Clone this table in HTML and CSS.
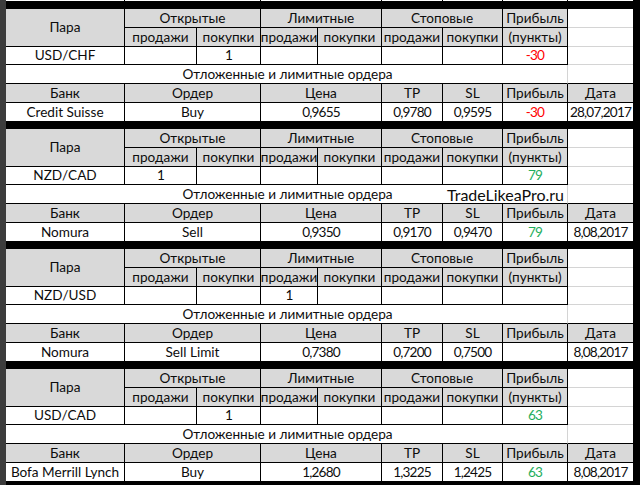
FILE: index.html
```html
<!DOCTYPE html>
<html lang="ru">
<head>
<meta charset="utf-8">
<title>Ордера</title>
<link rel="stylesheet" href="styles.css">
</head>
<body>
<div class="page">
  <div class="gutter"></div>
  <div class="sheet">
    <div class="prev">
      <div class="c"></div><div class="c s2"></div><div class="c s2"></div><div class="c"></div><div class="c"></div><div class="c"></div><div class="c last"></div>
    </div>

    <div class="band"></div>
    <section class="block">
      <div class="c h pair">Пара</div>
      <div class="c h s2">Открытые</div>
      <div class="c h s2">Лимитные</div>
      <div class="c h s2">Стоповые</div>
      <div class="c h">Прибыль</div>
      <div class="c blank"></div>
      <div class="c h">продажи</div><div class="c h">покупки</div>
      <div class="c h">продажи</div><div class="c h">покупки</div>
      <div class="c h">продажи</div><div class="c h">покупки</div>
      <div class="c h">(пункты)</div>
      <div class="c blank"></div>
      <div class="c">USD/CHF</div><div class="c"></div><div class="c n">1</div><div class="c"></div><div class="c"></div><div class="c"></div><div class="c"></div><div class="c n neg">-30</div>
      <div class="c blank"></div>
      <div class="c label">Отложенные и лимитные ордера</div>
      <div class="c labelend"></div>
      <div class="c h">Банк</div><div class="c h s2">Ордер</div><div class="c h s2">Цена</div><div class="c h">TP</div><div class="c h">SL</div><div class="c h">Прибыль</div><div class="c h last">Дата</div>
      <div class="c">Credit Suisse</div><div class="c s2">Buy</div><div class="c s2 n">0,9655</div><div class="c n">0,9780</div><div class="c n">0,9595</div><div class="c n neg">-30</div><div class="c n last">28,07,2017</div>
    </section>

    <div class="band"></div>
    <section class="block">
      <div class="c h pair">Пара</div>
      <div class="c h s2">Открытые</div>
      <div class="c h s2">Лимитные</div>
      <div class="c h s2">Стоповые</div>
      <div class="c h">Прибыль</div>
      <div class="c blank"></div>
      <div class="c h">продажи</div><div class="c h">покупки</div>
      <div class="c h">продажи</div><div class="c h">покупки</div>
      <div class="c h">продажи</div><div class="c h">покупки</div>
      <div class="c h">(пункты)</div>
      <div class="c blank"></div>
      <div class="c">NZD/CAD</div><div class="c n">1</div><div class="c"></div><div class="c"></div><div class="c"></div><div class="c"></div><div class="c"></div><div class="c n pos">79</div>
      <div class="c blank"></div>
      <div class="c label">Отложенные и лимитные ордера</div>
      <div class="c labelend"></div>
      <div class="c h">Банк</div><div class="c h s2">Ордер</div><div class="c h s2">Цена</div><div class="c h">TP</div><div class="c h">SL</div><div class="c h">Прибыль</div><div class="c h last">Дата</div>
      <div class="c">Nomura</div><div class="c s2">Sell</div><div class="c s2 n">0,9350</div><div class="c n">0,9170</div><div class="c n">0,9470</div><div class="c n pos">79</div><div class="c n last">8,08,2017</div>
      <div class="watermark">TradeLikeaPro.ru</div>
    </section>

    <div class="band"></div>
    <section class="block">
      <div class="c h pair">Пара</div>
      <div class="c h s2">Открытые</div>
      <div class="c h s2">Лимитные</div>
      <div class="c h s2">Стоповые</div>
      <div class="c h">Прибыль</div>
      <div class="c blank"></div>
      <div class="c h">продажи</div><div class="c h">покупки</div>
      <div class="c h">продажи</div><div class="c h">покупки</div>
      <div class="c h">продажи</div><div class="c h">покупки</div>
      <div class="c h">(пункты)</div>
      <div class="c blank"></div>
      <div class="c">NZD/USD</div><div class="c"></div><div class="c"></div><div class="c n">1</div><div class="c"></div><div class="c"></div><div class="c"></div><div class="c"></div>
      <div class="c blank"></div>
      <div class="c label">Отложенные и лимитные ордера</div>
      <div class="c labelend"></div>
      <div class="c h">Банк</div><div class="c h s2">Ордер</div><div class="c h s2">Цена</div><div class="c h">TP</div><div class="c h">SL</div><div class="c h">Прибыль</div><div class="c h last">Дата</div>
      <div class="c">Nomura</div><div class="c s2">Sell Limit</div><div class="c s2 n">0,7380</div><div class="c n">0,7200</div><div class="c n">0,7500</div><div class="c"></div><div class="c n last">8,08,2017</div>
    </section>

    <div class="band"></div>
    <section class="block">
      <div class="c h pair">Пара</div>
      <div class="c h s2">Открытые</div>
      <div class="c h s2">Лимитные</div>
      <div class="c h s2">Стоповые</div>
      <div class="c h">Прибыль</div>
      <div class="c blank"></div>
      <div class="c h">продажи</div><div class="c h">покупки</div>
      <div class="c h">продажи</div><div class="c h">покупки</div>
      <div class="c h">продажи</div><div class="c h">покупки</div>
      <div class="c h">(пункты)</div>
      <div class="c blank"></div>
      <div class="c">USD/CAD</div><div class="c"></div><div class="c n">1</div><div class="c"></div><div class="c"></div><div class="c"></div><div class="c"></div><div class="c n pos">63</div>
      <div class="c blank"></div>
      <div class="c label">Отложенные и лимитные ордера</div>
      <div class="c labelend"></div>
      <div class="c h">Банк</div><div class="c h s2">Ордер</div><div class="c h s2">Цена</div><div class="c h">TP</div><div class="c h">SL</div><div class="c h">Прибыль</div><div class="c h last">Дата</div>
      <div class="c">Bofa Merrill Lynch</div><div class="c s2">Buy</div><div class="c s2 n">1,2680</div><div class="c n">1,3225</div><div class="c n">1,2425</div><div class="c n pos">63</div><div class="c n last">8,08,2017</div>
    </section>
    <div class="band"></div>
  </div>
  <div class="edge"></div>
</div>
</body>
</html>
```

FILE: styles.css
```css
* { box-sizing: border-box; }
html, body { margin: 0; padding: 0; background: #ffffff; }
body {
  font-family: Lato, "Liberation Sans", sans-serif;
  font-size: 13.6px;
  color: #0d0d0d;
}
.page {
  display: flex;
  width: 640px;
  height: 485px;
  overflow: hidden;
}
.gutter {
  width: 6px;
  flex: none;
  background: #3c3c3c;
}
.edge {
  width: 7px;
  flex: none;
  background: #000000;
}
.sheet {
  width: 627px;
  flex: none;
  display: flex;
  flex-direction: column;
}
.prev {
  height: 2px;
  flex: none;
  overflow: hidden;
  display: grid;
  grid-template-columns: 119px 72px 64px 57px 64px 61px 60px 65px 65px;
}
.prev .c { height: 2px; }
.band {
  height: 7px;
  flex: none;
  background: #000000;
}
.block {
  position: relative;
  flex: none;
  display: grid;
  grid-template-columns: 119px 72px 64px 57px 64px 61px 60px 65px 65px;
  grid-template-rows: 19px 19px 18px 19px 19px 19px;
}
.c {
  display: flex;
  align-items: center;
  justify-content: center;
  border-right: 1px solid #000000;
  border-bottom: 1px solid #000000;
  background: #ffffff;
  white-space: nowrap;
  line-height: 1;
  padding-top: 1px;
}
.n { letter-spacing: -0.8px; }
.s2 { grid-column: span 2; }
.h { background: #d9d9d9; }
.pair { grid-row: span 2; }
.blank {
  border-right: none;
  border-bottom: 1px solid #d4d4d4;
}
.label {
  grid-column: span 8;
  border-right: 1px solid #d4d4d4;
  padding-left: 2px;
}
.labelend { border-right: none; }
.last { border-right: none; }
.neg { color: #ff0000; }
.pos { color: #1fae5c; }
.watermark {
  position: absolute;
  left: 441px;
  top: 56px;
  height: 19px;
  display: flex;
  align-items: center;
  font-size: 16px;
  color: #0d0d0d;
  white-space: nowrap;
}
```
